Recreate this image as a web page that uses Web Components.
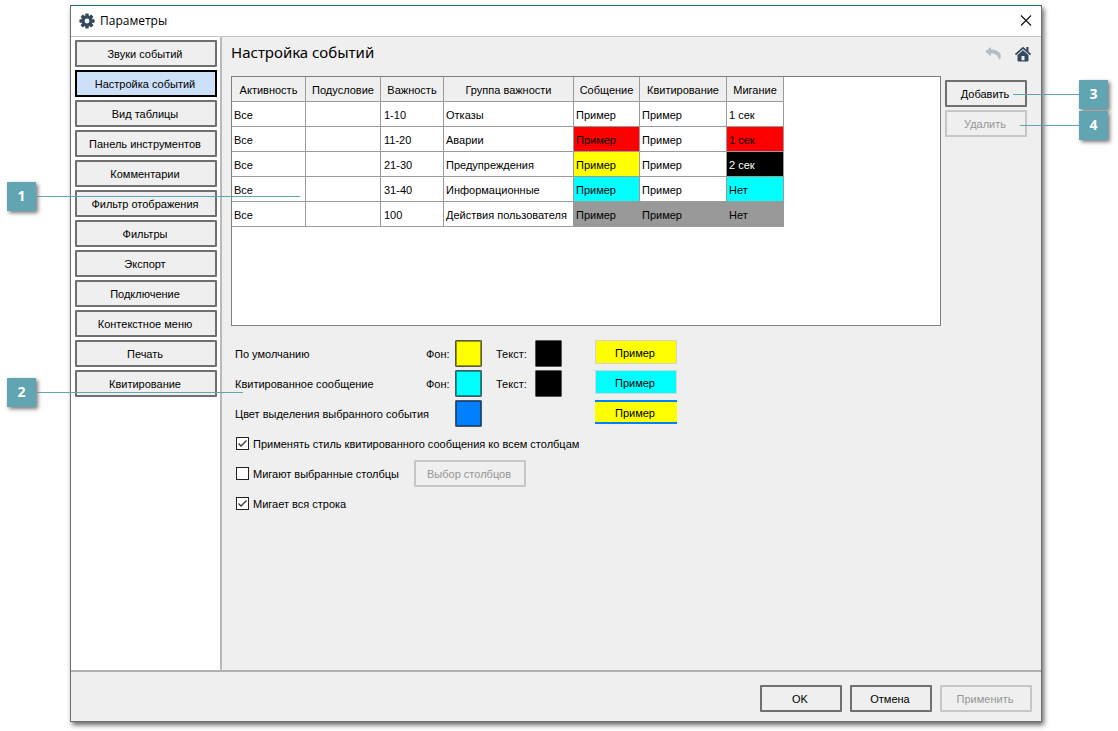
<!DOCTYPE html>
<html lang="ru">
<head>
<meta charset="utf-8">
<title>Параметры</title>
<style>
html{background:#fff}
body{margin:0;min-height:100vh;display:flex;flex-direction:column;position:relative;
 font:11px/14px "Liberation Sans",Arial,sans-serif;color:#000;--line:#707070;--face:#efefef}
</style>
</head>
<body>
<settings-dialog caption="Параметры">
  <side-nav slot="nav"></side-nav>
  <events-page></events-page>
  <push-button slot="actions" size="medium">OK</push-button>
  <push-button slot="actions" size="medium">Отмена</push-button>
  <push-button slot="actions" size="large" disabled>Применить</push-button>
</settings-dialog>
<call-out side="left" style="--y:182px;--reach:264px">1</call-out>
<call-out side="left" style="--y:378px;--reach:207px">2</call-out>
<call-out side="right" style="--y:80px;--reach:66px">3</call-out>
<call-out side="right" style="--y:111px;--reach:59px">4</call-out>
<script>
class Base extends HTMLElement{
  connectedCallback(){
    if(this.shadowRoot)return;
    const t=document.createElement('template');
    t.innerHTML=this.view();
    this.attachShadow({mode:'open'}).append(t.content.cloneNode(true));
  }
}

customElements.define('push-button',class extends Base{
  view(){return `<style>
:host{display:block;width:142px}
:host([size=medium]){width:82px}
:host([size=large]){width:92px}
:host([size=wide]){width:112px}
button{box-sizing:border-box;display:block;width:100%;height:27px;margin:0;padding:1px 2px 0 0;border:2px solid var(--line);border-radius:1px;background:var(--face);font:inherit;color:#000;white-space:nowrap}
button[aria-current]{background:#cce0f8;border-color:#000;border-radius:0}
button:disabled{border-color:#c6c6c6;color:#959595}
</style><button type="button"${this.hasAttribute('disabled')?' disabled':''}${this.hasAttribute('current')?' aria-current="page"':''}><slot></slot></button>`}
});

customElements.define('side-nav',class extends Base{
  view(){
    const items=['Звуки событий','Настройка событий','Вид таблицы','Панель инструментов','Комментарии','Фильтр отображения','Фильтры','Экспорт','Подключение','Контекстное меню','Печать','Квитирование'];
    return `<style>
:host{display:block;background:#fff;border-right:2px solid #b9b9b9;padding:3px 3px 3px 4px}
nav{display:flex;flex-direction:column;gap:3px}
</style><nav>${items.map((n,i)=>`<push-button${i===1?' current':''}>${n}</push-button>`).join('')}</nav>`}
});

customElements.define('settings-dialog',class extends Base{
  view(){return `<style>
:host{display:flex;flex-direction:column;flex:1;margin:5px 76px 9px 70px;background:var(--face);border:1px solid #6e6e6e;border-top-color:#1f6f6f;box-shadow:2px 3px 5px #0009}
header{display:flex;align-items:center;height:30px;background:#fff;padding:0 7px 0 8px;gap:5px;font:12px/16px "Open Sans",sans-serif}
header span{flex:1}
.x{width:16px;height:16px;padding:0;border:0;background:none;display:block}
svg{display:block}
.body{flex:1;display:flex;border-top:1px solid #c4c4c4}
main{flex:1;min-width:0}
footer{display:flex;justify-content:flex-end;gap:8px;padding:13px 9px 9px;border-top:2px solid #b0b0b0}
</style>
<header><svg width="16" height="16" viewBox="-8 -8 16 16" aria-hidden="true"><g fill="#34495e"><rect x="-1.700" y="-7.600" width="3.400" height="15.200" rx=".6"/><rect x="-1.700" y="-7.600" width="3.400" height="15.200" rx=".6" transform="rotate(45)"/><rect x="-1.700" y="-7.600" width="3.400" height="15.200" rx=".6" transform="rotate(90)"/><rect x="-1.700" y="-7.600" width="3.400" height="15.200" rx=".6" transform="rotate(135)"/><circle r="5.700"/></g><circle r="2.400" fill="#fff"/></svg>
<span>${this.getAttribute('caption')}</span>
<button class="x" type="button" aria-label="Закрыть"><svg width="16" height="16" viewBox="0 0 16 16"><path d="M3 2.500 13 12.500M13 2.500 3 12.500" stroke="#111" stroke-width="1.100" fill="none"/></svg></button></header>
<div class="body"><slot name="nav"></slot><main><slot></slot></main></div>
<footer><slot name="actions"></slot></footer>`}
});

customElements.define('events-table',class extends Base{
  view(){
    const rows=[['1-10','Отказы','','','','1 сек'],['11-20','Аварии','red','','red','1 сек'],['21-30','Предупреждения','yellow','','dark','2 сек'],['31-40','Информационные','cyan','','cyan','Нет'],['100','Действия пользователя','gray','gray','gray','Нет']];
    const w=[74,75,63,130,66,87,57];
    return `<style>
:host{display:block;flex:1;min-width:0;box-sizing:border-box;height:250px;background:#fff;border:1px solid #7f7f7f;overflow:hidden}
table{border-collapse:separate;border-spacing:0;table-layout:fixed;width:552px}
th,td{box-sizing:border-box;height:25px;padding:2px 0 0 2px;border:0 solid #9a9a9a;border-width:0 1px 1px 0;font-weight:400;text-align:left;white-space:nowrap}
th{background:var(--face);text-align:center;padding:2px 0 0}
td:nth-child(3){padding-left:3px}
.red{background:#f00}.yellow{background:#ff0}.cyan{background:#0ff}.gray{background:#999}.dark{background:#000;color:#fff}
</style><table><colgroup>${w.map(x=>`<col style="width:${x}px">`).join('')}</colgroup>
<thead><tr>${['Активность','Подусловие','Важность','Группа важности','Собщение','Квитирование','Мигание'].map(h=>`<th scope="col">${h}</th>`).join('')}</tr></thead>
<tbody>${rows.map(r=>`<tr><td>Все</td><td></td><td>${r[0]}</td><td>${r[1]}</td><td class="${r[2]}">Пример</td><td class="${r[3]}">Пример</td><td class="${r[4]}">${r[5]}</td></tr>`).join('')}</tbody></table>`}
});

customElements.define('color-row',class extends Base{
  view(){
    const a=n=>this.getAttribute(n);
    const sel=a('kind')==='selection';
    return `<style>
:host{display:grid;grid-template-columns:191px 29px 41px 39px 60px 82px;align-items:center;height:27px}
label{padding-top:1px}
.wide{grid-column:1/3}
input{appearance:none;box-sizing:border-box;width:27px;height:27px;padding:0;margin:0;border:1px solid #555;border-radius:1px;background:none;display:block}
input::-webkit-color-swatch-wrapper{padding:0}
input::-webkit-color-swatch{border:1px solid #0006;border-radius:0}
output{grid-column:6;align-self:start;box-sizing:border-box;height:24px;padding:5px 2px 0 0;border:1px solid #d4d4d4;text-align:center}
:host([kind=selection]) output{border:solid #0080ff;border-width:2px 0;padding-top:4px}
</style>
<label for="bg" class="${sel?'wide':''}">${a('name')}</label>
${sel?'':'<label for="bg">Фон:</label>'}<input id="bg" type="color" value="${a('bg')}">
${sel?'':'<label for="fg">Текст:</label><input id="fg" type="color" value="#000000">'}
<output style="background:${a('sample')}">Пример</output>`}
});

customElements.define('check-row',class extends Base{
  view(){return `<style>
:host{display:flex;align-items:center;height:27px;padding-left:1px;gap:15px}
label{display:flex;align-items:center;gap:4px}
label>span:last-child{padding-top:1px}
input{appearance:none;box-sizing:border-box;width:13px;height:13px;margin:0;border:1px solid #222;background:#fff}
.box{display:grid}
.box>*{grid-area:1/1}
svg{display:none;pointer-events:none}
input:checked+svg{display:block}
</style><label><span class="box"><input type="checkbox"${this.hasAttribute('checked')?' checked':''}><svg width="13" height="13" viewBox="0 0 13 13"><path d="M2.500 6.500 5 9l5.500-5.500" fill="none" stroke="#333" stroke-width="1.300"/></svg></span><span>${this.getAttribute('name')}</span></label><slot></slot>`}
});

customElements.define('events-page',class extends Base{
  view(){return `<style>
:host{display:block;padding:0 14px 0 9px}
.top{display:flex;height:39px;gap:14px}
h1{flex:1;margin:0;padding-top:4px;font:400 15px/22px "Noto Sans","Open Sans",sans-serif}
.icon{width:16px;height:16px;margin:9px 0 0;padding:0;border:0;background:none}
.icon:last-child{margin-right:-4px}
svg{display:block}
.list{display:flex;gap:4px}
.side{display:flex;flex-direction:column;gap:3px;padding-top:4px}
form{display:flex;flex-direction:column;gap:3px;padding:14px 0 0 4px}
</style>
<div class="top"><h1>Настройка событий</h1>
<button class="icon" type="button" disabled aria-label="Отменить"><svg width="16" height="16" viewBox="0 0 16 16"><path d="M6 1 0 5.500l6 4.700V7.500c4 0 6.600 1.200 8.200 6.300 1-.8 1.800-2 1.600-4C15.500 6 11 3.600 6 3.600z" fill="#b4bcc5"/></svg></button>
<button class="icon" type="button" aria-label="Домой"><svg width="16" height="16" viewBox="0 0 16 16"><path d="M.5 8.500 8 1.800l7.500 6.700" fill="none" stroke="#34495e" stroke-width="1.700"/><path d="M11.300 1h2.200v5l-2.200-2z" fill="#34495e"/><path fill-rule="evenodd" d="M8 4.200 2.500 9v5.500q0 1 1 1h9q1 0 1-1V9zM6.500 10h3v4.200h-3z" fill="#34495e"/></svg></button></div>
<div class="list"><events-table></events-table><div class="side"><push-button size="medium">Добавить</push-button><push-button size="medium" disabled>Удалить</push-button></div></div>
<form>
<color-row name="По умолчанию" bg="#ffff00" sample="#ff0"></color-row>
<color-row name="Квитированное сообщение" bg="#00ffff" sample="#0ff"></color-row>
<color-row kind="selection" name="Цвет выделения выбранного события" bg="#0080ff" sample="#ff0"></color-row>
<check-row name="Применять стиль квитированного сообщения ко всем столбцам" checked></check-row>
<check-row name="Мигают выбранные столбцы"><push-button size="wide" disabled>Выбор столбцов</push-button></check-row>
<check-row name="Мигает вся строка" checked></check-row>
</form>`}
});

customElements.define('call-out',class extends Base{
  view(){return `<style>
:host{position:absolute;top:var(--y);display:flex;align-items:center;pointer-events:none}
:host([side=left]){left:7px}
:host([side=right]){right:10px;flex-direction:row-reverse}
b{width:29px;height:29px;background:#62a5b2;color:#fff;text-align:center;font:700 14px/28px "Open Sans",sans-serif;box-shadow:2px 2px 4px #0008}
i{width:var(--reach);height:1px;background:#62a5b2}
</style><b><slot></slot></b><i></i>`}
});
</script>
</body>
</html>
